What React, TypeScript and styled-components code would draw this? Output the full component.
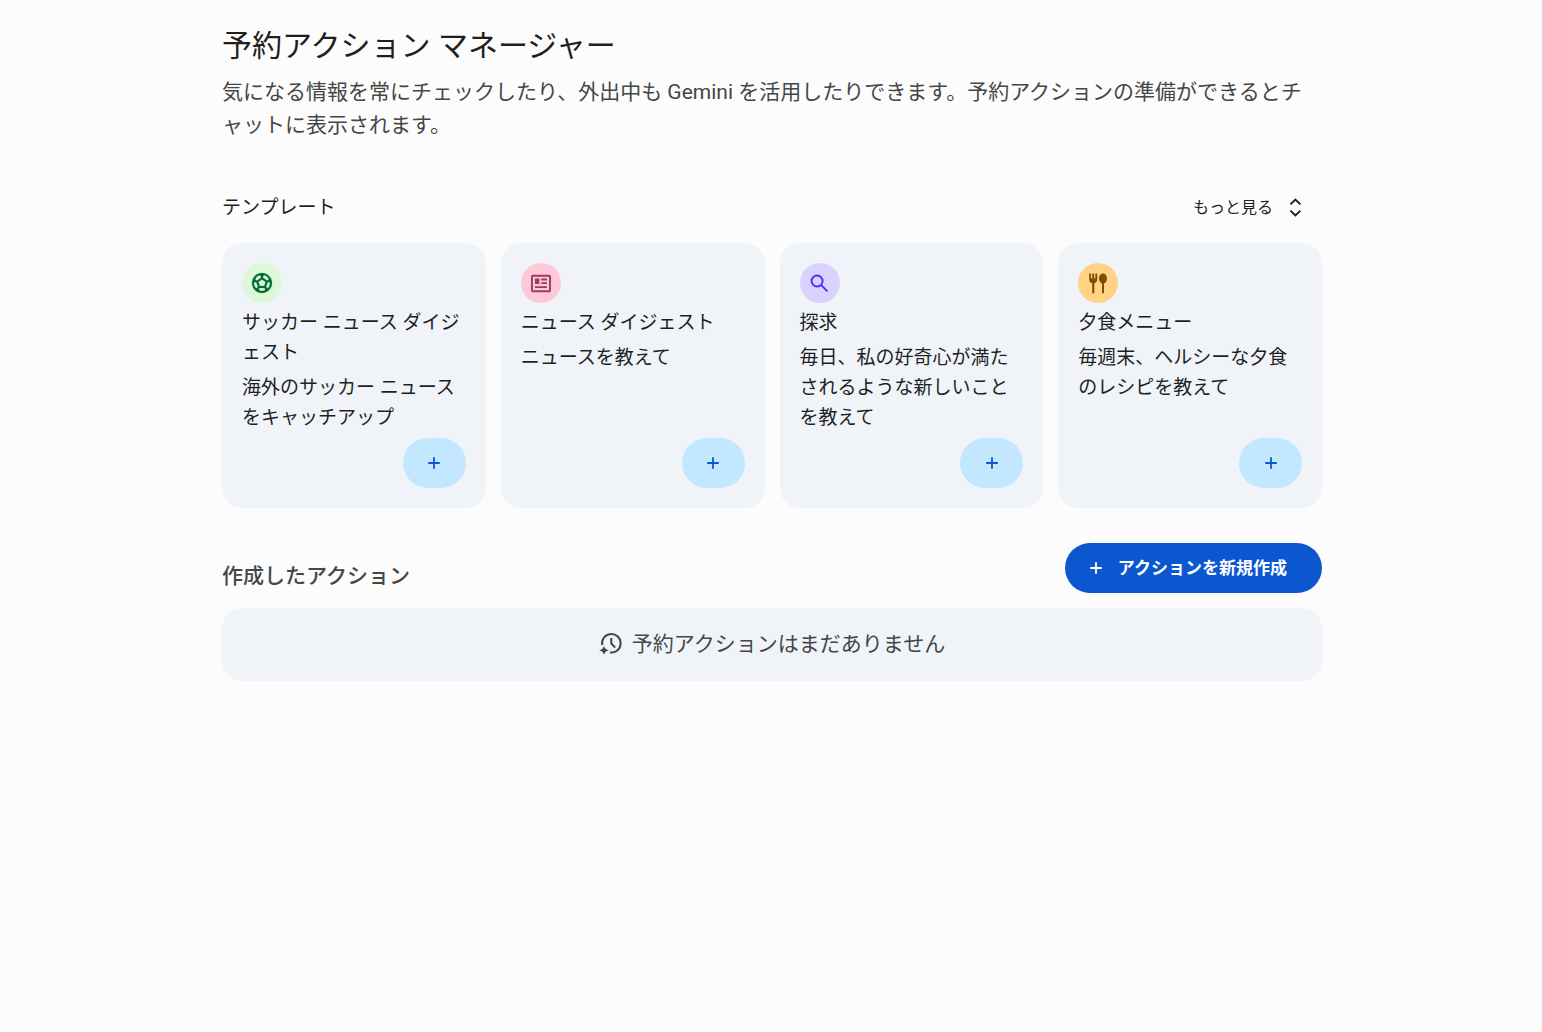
import React from "react";
import styled, { createGlobalStyle } from "styled-components";

const GlobalStyle = createGlobalStyle`
  * { box-sizing: border-box; }
  body {
    margin: 0;
    background: #fdfcfc;
    color: #1f1f1f;
    font-family: Roboto, "Noto Sans CJK JP", sans-serif;
  }
  h1, h2, h3, p, ul { margin: 0; padding: 0; font-weight: 400; }
  button { font-family: inherit; line-height: 20px; border: 0; cursor: pointer; }
  svg { display: block; flex: none; }
`;

const Page = styled.div`
  padding: 26px 20px 40px 22px;
`;

const Content = styled.main`
  max-width: 1100px;
  margin: 0 auto;
`;

const Title = styled.h1`
  font-size: 30px;
  line-height: 40px;
`;

const Lead = styled.p`
  margin-top: 10px;
  font-size: 21px;
  line-height: 33px;
  color: #444746;
`;

const TemplatesHeader = styled.div`
  display: flex;
  align-items: center;
  justify-content: space-between;
  margin-top: 41px;
  padding-right: 15px;
`;

const TemplatesTitle = styled.h2`
  font-size: 19px;
  line-height: 30px;
`;

const MoreButton = styled.button`
  display: flex;
  align-items: center;
  gap: 10px;
  height: 50px;
  padding: 0;
  background: transparent;
  color: #1f1f1f;
  font-size: 16px;
`;

const CardGrid = styled.ul`
  display: grid;
  grid-template-columns: repeat(4, minmax(0, 1fr));
  gap: 15px;
  margin-top: 10px;
  list-style: none;
`;

const Card = styled.li`
  display: flex;
  flex-direction: column;
  gap: 5px;
  padding: 20px;
  border-radius: 20px;
  background: #f0f4f9;
  font-size: 19px;
  line-height: 30px;
`;

const IconBadge = styled.span<{ $bg: string; $fg: string }>`
  display: flex;
  align-items: center;
  justify-content: center;
  width: 40px;
  height: 40px;
  border-radius: 50%;
  background: ${(p) => p.$bg};
  color: ${(p) => p.$fg};
`;

const CardTitle = styled.h3`
  font-size: inherit;
`;

const CardText = styled.p``;

const AddButton = styled.button`
  display: flex;
  align-items: center;
  justify-content: center;
  align-self: flex-end;
  width: 63px;
  height: 50px;
  margin-top: auto;
  padding: 0;
  border-radius: 25px;
  background: #c2e7ff;
  color: #0b57d0;
`;

const ActionsHeader = styled.div`
  display: flex;
  align-items: flex-end;
  justify-content: space-between;
  margin-top: 35px;
`;

const ActionsTitle = styled.h2`
  font-size: 21px;
  line-height: 33px;
  font-weight: 500;
  color: #444746;
`;

const CreateButton = styled.button`
  display: flex;
  align-items: center;
  gap: 12px;
  height: 50px;
  padding: 0 35px 0 21px;
  border-radius: 25px;
  background: #0b57d0;
  color: #fff;
  font-size: 17px;
  font-weight: 700;
`;

const EmptyState = styled.div`
  display: flex;
  align-items: center;
  justify-content: center;
  gap: 8px;
  margin-top: 15px;
  padding: 20px;
  border-radius: 20px;
  background: #f0f4f9;
  color: #444746;
  font-size: 21px;
  line-height: 33px;
`;

const PlusIcon = () => (
  <svg width="20" height="20" viewBox="0 0 20 20" fill="currentColor" aria-hidden="true">
    <path d="M9.100 10.900H4.200V9.100h4.900V4.200h1.800v4.900h4.900v1.800h-4.900v4.900H9.100z" />
  </svg>
);

const UnfoldIcon = () => (
  <svg width="24" height="24" viewBox="0 0 24 24" fill="none" stroke="currentColor" strokeWidth="1.9" aria-hidden="true">
    <path d="M7.400 8.400 12.400 3.600l5 4.800M7.400 14.600l5 4.800 5-4.800" />
  </svg>
);

const SoccerIcon = () => (
  <svg
    width="24"
    height="24"
    viewBox="0 0 24 24"
    fill="currentColor"
    stroke="currentColor"
    strokeWidth="0.2"
    aria-hidden="true"
  >
    <path d="M12 2C6.48 2 2 6.48 2 12s4.48 10 10 10 10-4.48 10-10S17.52 2 12 2zm1 3.3 1.35-.95c1.82.56 3.37 1.76 4.38 3.34l-.39 1.34-1.35.46L13 6.7V5.3zm-3.35-.95L11 5.3v1.4L7.01 9.49l-1.35-.46-.39-1.34c1.01-1.57 2.56-2.77 4.38-3.34zM7.08 17.11l-1.14.1C4.73 15.81 4 13.99 4 12c0-.12.01-.23.02-.35l1-.73 1.38.48 1.46 4.34-.78 1.37zm7.42 2.48c-.79.26-1.63.41-2.5.41s-1.71-.15-2.5-.41l-.69-1.49.64-1.1h5.11l.64 1.11-.7 1.48zM14.27 15H9.73l-1.35-4.02L12 8.44l3.63 2.54L14.27 15zm3.79 2.21-1.14-.1-.79-1.37 1.46-4.34 1.39-.47 1 .73c.01.11.02.22.02.34 0 1.99-.73 3.81-1.94 5.21z" />
  </svg>
);

const NewsIcon = () => (
  <svg width="24" height="24" viewBox="0 0 24 24" aria-hidden="true">
    <rect x="3" y="4.700" width="18" height="15.500" rx="0.6" fill="none" stroke="currentColor" strokeWidth="1.9" />
    <path fill="currentColor" d="M6 7.600h4.400v5.400H6zM12.200 7.600H18v1.800h-5.800zM12.200 11.200H18v1.800h-5.800zM6 15.200h12v1.800H6z" />
  </svg>
);

const SearchIcon = () => (
  <svg width="24" height="24" viewBox="0 0 24 24" fill="none" stroke="currentColor" strokeWidth="1.9" aria-hidden="true">
    <circle cx="9.100" cy="10" r="5.500" />
    <path d="m13 13.900 6.400 6.400" />
  </svg>
);

const ForkSpoonIcon = () => (
  <svg width="24" height="24" viewBox="0 0 24 24" fill="currentColor" aria-hidden="true">
    <path d="M3.200 2.400h1.800v5h1.200v-5h2v5h1.200v-5h1.800v6.400c0 1.700-1.100 3-2.900 3.500v9.900H6.200v-9.900c-1.900-.5-3-1.800-3-3.500z" />
    <path d="M17 2.400c2.300 0 4 2.200 4 5.100 0 2.300-1.200 4.200-3 4.900v9.800h-2v-9.800c-1.800-.7-3-2.600-3-4.900 0-2.900 1.700-5.100 4-5.100z" />
  </svg>
);

const ScheduleSparkIcon = () => (
  <svg width="25" height="25" viewBox="0 1 25 25" aria-hidden="true">
    <g fill="none" stroke="currentColor" strokeWidth="2">
      <path d="M3.200 14A9.300 9.300 0 1 1 11 21.500" />
      <path d="M12.300 7v5.500l3.900 4.100" />
    </g>
    <path fill="currentColor" d="M5 14.700Q5.900 18.400 9.800 19.300 5.900 20.200 5 23.900 4.100 20.200.2 19.300 4.100 18.400 5 14.700Z" />
  </svg>
);

const templates = [
  {
    title: "サッカー ニュース ダイジェスト",
    text: "海外のサッカー ニュースをキャッチアップ",
    bg: "#ddf8d8",
    fg: "#006c35",
    Icon: SoccerIcon,
  },
  {
    title: "ニュース ダイジェスト",
    text: "ニュースを教えて",
    bg: "#ffc8d9",
    fg: "#9a3c5e",
    Icon: NewsIcon,
  },
  {
    title: "探求",
    text: "毎日、私の好奇心が満たされるような新しいことを教えて",
    bg: "#d9d2ff",
    fg: "#5629f5",
    Icon: SearchIcon,
  },
  {
    title: "夕食メニュー",
    text: "毎週末、ヘルシーな夕食のレシピを教えて",
    bg: "#ffd285",
    fg: "#7a4f00",
    Icon: ForkSpoonIcon,
  },
];

export default function App() {
  return (
    <Page lang="ja">
      <GlobalStyle />
      <Content>
        <Title>予約アクション マネージャー</Title>
        <Lead>
          気になる情報を常にチェックしたり、外出中も Gemini を活用したりできます。予約アクションの準備ができるとチャットに表示されます。
        </Lead>

        <TemplatesHeader>
          <TemplatesTitle>テンプレート</TemplatesTitle>
          <MoreButton type="button">
            もっと見る
            <UnfoldIcon />
          </MoreButton>
        </TemplatesHeader>
        <CardGrid>
          {templates.map(({ title, text, bg, fg, Icon }) => (
            <Card key={title}>
              <IconBadge $bg={bg} $fg={fg}>
                <Icon />
              </IconBadge>
              <CardTitle>{title}</CardTitle>
              <CardText>{text}</CardText>
              <AddButton type="button" aria-label={title}>
                <PlusIcon />
              </AddButton>
            </Card>
          ))}
        </CardGrid>

        <ActionsHeader>
          <ActionsTitle>作成したアクション</ActionsTitle>
          <CreateButton type="button">
            <PlusIcon />
            アクションを新規作成
          </CreateButton>
        </ActionsHeader>
        <EmptyState>
          <ScheduleSparkIcon />
          予約アクションはまだありません
        </EmptyState>
      </Content>
    </Page>
  );
}
